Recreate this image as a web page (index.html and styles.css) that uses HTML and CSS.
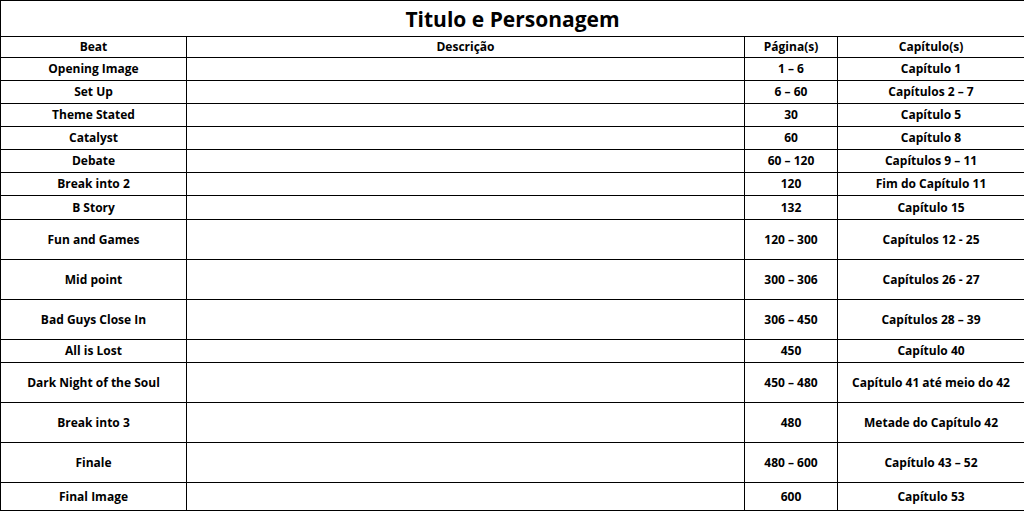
FILE: index.html
```html
<!DOCTYPE html>
<html lang="pt">
<head>
<meta charset="utf-8">
<link rel="stylesheet" href="styles.css">
</head>
<body>
<table class="beats">
  <colgroup>
    <col class="c-beat"><col class="c-desc"><col class="c-pag"><col class="c-cap">
  </colgroup>
  <tr class="r-title"><th colspan="4" class="title">Titulo e Personagem</th></tr>
  <tr class="r-head"><th>Beat</th><th>Descrição</th><th>Página(s)</th><th>Capítulo(s)</th></tr>
  <tr class="r-s"><td>Opening Image</td><td></td><td>1 – 6</td><td>Capítulo 1</td></tr>
  <tr class="r-s"><td>Set Up</td><td></td><td>6 – 60</td><td>Capítulos 2 – 7</td></tr>
  <tr class="r-s"><td>Theme Stated</td><td></td><td>30</td><td>Capítulo 5</td></tr>
  <tr class="r-s"><td>Catalyst</td><td></td><td>60</td><td>Capítulo 8</td></tr>
  <tr class="r-s"><td>Debate</td><td></td><td>60 – 120</td><td>Capítulos 9 – 11</td></tr>
  <tr class="r-s"><td>Break into 2</td><td></td><td>120</td><td>Fim do Capítulo 11</td></tr>
  <tr class="r-m"><td>B Story</td><td></td><td>132</td><td>Capítulo 15</td></tr>
  <tr class="r-l"><td>Fun and Games</td><td></td><td>120 – 300</td><td>Capítulos 12 - 25</td></tr>
  <tr class="r-l"><td>Mid point</td><td></td><td>300 – 306</td><td>Capítulos 26 - 27</td></tr>
  <tr class="r-l"><td>Bad Guys Close In</td><td></td><td>306 – 450</td><td>Capítulos 28 – 39</td></tr>
  <tr class="r-s"><td>All is Lost</td><td></td><td>450</td><td>Capítulo 40</td></tr>
  <tr class="r-l"><td>Dark Night of the Soul</td><td></td><td>450 – 480</td><td>Capítulo 41 até meio do 42</td></tr>
  <tr class="r-l"><td>Break into 3</td><td></td><td>480</td><td>Metade do Capítulo 42</td></tr>
  <tr class="r-l"><td>Finale</td><td></td><td>480 – 600</td><td>Capítulo 43 – 52</td></tr>
  <tr class="r-f"><td>Final Image</td><td></td><td>600</td><td>Capítulo 53</td></tr>
</table>
</body>
</html>
```
FILE: styles.css
```css
html, body {
  margin: 0;
  padding: 0;
  background: #fff;
}
body {
  font-family: "Open Sans", "Liberation Sans", sans-serif;
  color: #000;
}
.beats {
  width: 1024px;
  border-collapse: collapse;
  table-layout: fixed;
}
.c-beat { width: 186px; }
.c-desc { width: 558px; }
.c-pag { width: 93px; }
.c-cap { width: 187px; }
.beats th, .beats td {
  border: 1px solid #000;
  padding: 0;
  text-align: center;
  vertical-align: middle;
  font-size: 12px;
  font-weight: 700;
  line-height: 14px;
}
.beats th.title {
  font-size: 21px;
  font-weight: 700;
  line-height: 24px;
}
.r-title { height: 36px; }
.r-head { height: 21px; }
.r-s { height: 23px; }
.r-m { height: 24px; }
.r-l { height: 40px; }
.r-f { height: 28px; }
```
